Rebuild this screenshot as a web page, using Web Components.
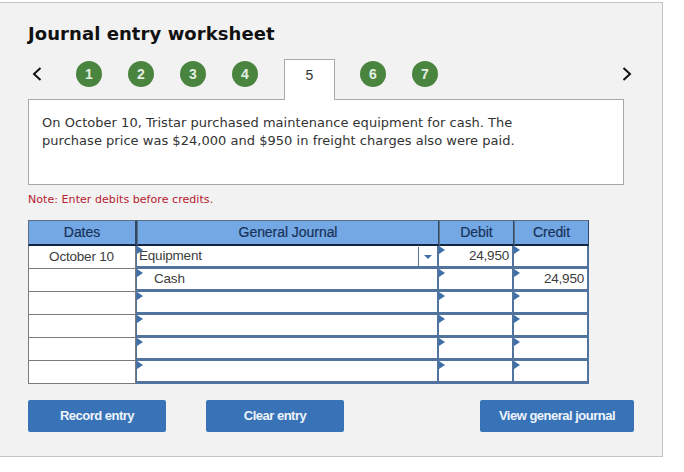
<!DOCTYPE html>
<html><head><meta charset="utf-8"><style>
html,body{margin:0;padding:0;background:#fff}
body{width:684px;height:472px;overflow:hidden}
</style></head><body>
<je-worksheet></je-worksheet>
<script>
const FA='"Liberation Sans",Arial,sans-serif', FV='"DejaVu Sans",Verdana,sans-serif';
function def(name,css,html){
  customElements.define(name,class extends HTMLElement{
    constructor(){super();const s=this.attachShadow({mode:'open'});
      s.innerHTML='<style>'+css+'</style>'+(typeof html==='function'?html(this):html);}
  });
}
def('je-step',`
:host{display:flex;width:26px;height:26px;border-radius:50%;background:#4a8540;color:#e4eee2;align-items:center;justify-content:center;font:bold 14px ${FA};flex:none;align-self:flex-start;margin-top:3px}
`,'<slot></slot>');
def('je-tab',`
:host{display:flex;width:51px;height:41px;box-sizing:border-box;background:#fff;border:1px solid #a8a8a8;border-bottom:0;margin-bottom:-1px;position:relative;z-index:1;align-items:flex-start;justify-content:center;padding-top:7px;font:14px ${FA};color:#333;flex:none}
`,'<slot></slot>');
def('je-chev',`
:host{display:block;width:12px;height:16px;flex:none;align-self:flex-start;margin-top:7px}
svg{display:block}
`,el=>`<svg width="12" height="16" viewBox="0 0 12 16"><path d="${el.getAttribute('dir')==='r'?'M2.5 2L9 8L2.5 14':'M9.5 2L3 8L9.5 14'}" fill="none" stroke="#111" stroke-width="2"/></svg>`);
def('je-btn',`
:host{display:flex;height:32px;padding-bottom:2px;background:#3873b8;border-radius:2px;color:#eef4fb;align-items:center;justify-content:center;font:bold 13px ${FA};letter-spacing:-.5px;flex:none;box-sizing:border-box}
`,'<slot></slot>');
def('je-cell',`
:host{display:flex;box-sizing:border-box;background:#fff;align-items:center;font:13.5px ${FA};letter-spacing:-.2px;color:#3c3c3c;position:relative;min-width:0;white-space:pre;padding-bottom:1px}
:host([kind=head]){background:#73a8e4;color:#17325a;justify-content:center;font-size:14px;letter-spacing:-.05px;-webkit-text-stroke:.2px #17325a;padding-bottom:2px}
:host([kind=date]){justify-content:center}
:host([kind=num]){justify-content:flex-end;padding-right:3px}
:host([kind=acct]){padding-left:2px}
:host([kind=acct][indent]){padding-left:17px}
.tri{position:absolute;left:0;top:0;width:0;height:0;border-left:6px solid #3f6fa8;border-top:4.5px solid transparent;border-bottom:4.5px solid transparent;display:none}
:host([mark]) .tri{display:block}
.drop{display:none;position:absolute;right:0;top:1px;bottom:0;width:18px;border-left:1px solid #5a7391;align-items:center;justify-content:center}
:host([drop]) .drop{display:flex}
.drop i{width:0;height:0;border-top:4px solid #3f6fa8;border-left:4.5px solid transparent;border-right:4.5px solid transparent}
`,'<span class="tri"></span><slot></slot><span class="drop"><i></i></span>');
def('je-table',`
:host{display:grid;width:561px;box-sizing:border-box;grid-template-columns:109px 302px 75px 75px;grid-template-rows:26px repeat(6,23px);background:#51749f}
`,()=>{
  const rows=[['October 10','Equipment','24,950','',1,0],['','Cash','','24,950',0,1],['','','','',0,0],['','','','',0,0],['','','','',0,0],['','','','',0,0]];
  const H=(t,w)=>`<je-cell kind="head" style="border:1px solid #5b6f85;border-right:${w}px solid #2f4868;border-bottom:2px solid #12263f">${t}</je-cell>`;
  let h=H('Dates',2)+H('General Journal',1)+H('Debit',1)+H('Credit',1);
  rows.forEach(r=>{
    h+=`<je-cell kind="date" style="border:1px solid #7b7b7b;border-top:0;border-right:0;margin-right:2px;box-shadow:1px 0 0 #7b7b7b;padding-right:1px">${r[0]}</je-cell>`;
    h+=`<je-cell kind="acct" mark ${r[4]?'drop':''} ${r[5]?'indent':''} style="border-bottom:3px solid #51749f;border-right:2px solid #51749f">${r[1]}</je-cell>`;
    h+=`<je-cell kind="num" mark style="border-bottom:3px solid #51749f;border-right:2px solid #51749f">${r[2]}</je-cell>`;
    h+=`<je-cell kind="num" mark style="border-bottom:3px solid #51749f;border-right:2px solid #51749f">${r[3]}</je-cell>`;
  });
  return h;
});
def('je-worksheet',`
:host{display:block;width:663px;height:455px;margin-top:2px;box-sizing:border-box;background:#f2f2f2;border:1px solid #c4c4c4;border-left:0;padding:0 0 0 28px;color:#111}
h1{margin:0;padding-top:19px;height:36px;font:bold 18px/24px ${FV};color:#111;letter-spacing:.07px}
.nav{display:flex;height:41px;width:604px}
.steps{display:flex}
.prompt{width:596px;height:86px;box-sizing:border-box;background:#fff;border:1px solid #a8a8a8;padding:14px 13px;font:13px/18px ${FV};letter-spacing:.03px;color:#333}
.note{font:11px/14px ${FV};letter-spacing:.06px;color:#b5202e;margin-top:8px;height:27px}
.btns{display:flex;margin-top:16px;width:606px}
`,`<h1>Journal entry worksheet</h1>
<div class="nav">
 <je-chev style="margin-left:3px;margin-top:8px"></je-chev>
 <div class="steps" style="margin-left:33px;gap:26px"><je-step>1</je-step><je-step>2</je-step><je-step>3</je-step><je-step>4</je-step></div>
 <je-tab style="margin-left:26px;align-self:flex-end">5</je-tab>
 <div class="steps" style="margin-left:25px;gap:26px"><je-step>6</je-step><je-step>7</je-step></div>
 <je-chev dir="r" style="margin-left:183px;margin-top:8px"></je-chev>
</div>
<div class="prompt">On October 10, Tristar purchased maintenance equipment for cash. The<br>purchase price was $24,000 and $950 in freight charges also were paid.</div>
<div class="note">Note: Enter debits before credits.</div>
<je-table></je-table>
<div class="btns"><je-btn style="width:138px">Record entry</je-btn><je-btn style="width:138px;margin-left:40px">Clear entry</je-btn><je-btn style="width:154px;margin-left:136px">View general journal</je-btn></div>`);
</script>
</body></html>
